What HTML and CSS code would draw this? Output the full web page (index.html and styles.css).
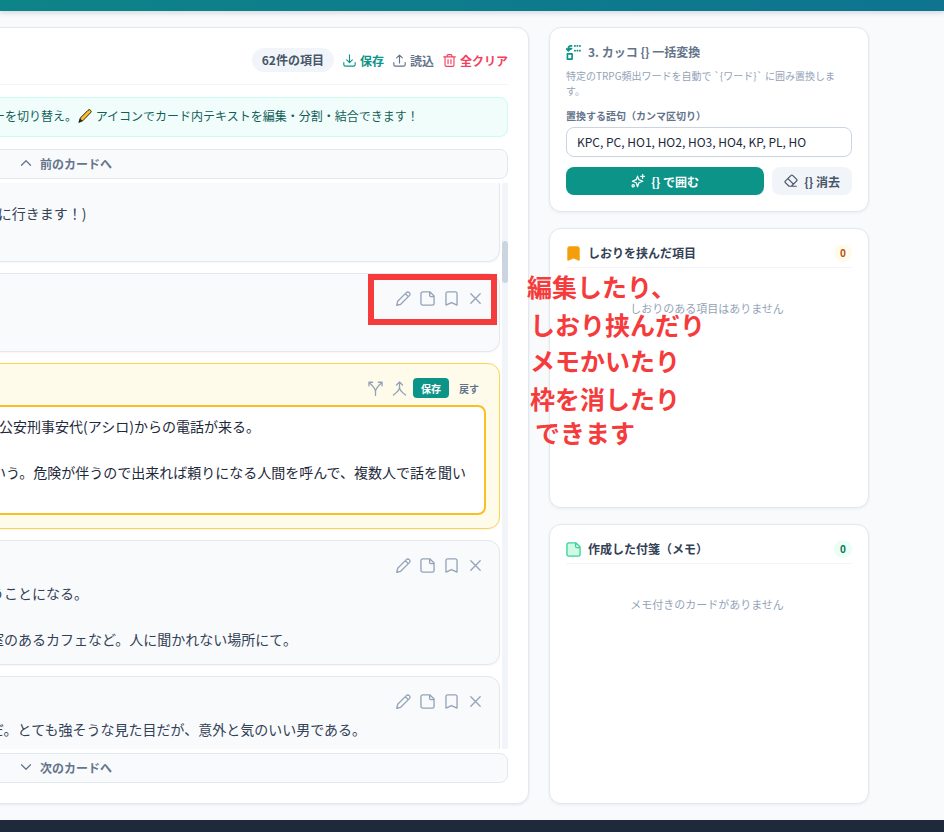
FILE: index.html
```html
<!DOCTYPE html>
<html lang="ja">
<head>
<meta charset="utf-8">
<title>カード編集</title>
<link rel="stylesheet" href="styles.css">
</head>
<body>
<svg class="sprite" aria-hidden="true">
  <symbol id="pencil" viewBox="0 0 16 16"><path d="M.8 15.200l1-4.200L11.300 1.500a2.300 2.300 0 0 1 3.200 3.200L5 14.200zM10 2.900l3.100 3.100"/></symbol>
  <symbol id="note" viewBox="0 0 16 16"><path d="M3 1h7.700L15 5.300V13a2 2 0 0 1-2 2H3a2 2 0 0 1-2-2V3a2 2 0 0 1 2-2zM10.300 1.200v3.500a1.200 1.200 0 0 0 1.200 1.200h3.300"/></symbol>
  <symbol id="bookmark" viewBox="0 0 16 16"><path d="M3.700 1h8.600A1.600 1.600 0 0 1 13.900 2.600v12.400L8 12.300 2.100 15V2.600A1.600 1.600 0 0 1 3.700 1z"/></symbol>
  <symbol id="close" viewBox="0 0 16 16"><path d="M3 3l10 10M13 3L3 13"/></symbol>
  <symbol id="split" viewBox="0 0 16 16"><path d="M8 15.500V11C8 8.500 6.500 6.500 1.500 1.800M8 11C8 8.500 9.500 6.500 14.500 1.800M1 5.200V1.300h4M11 1.300h4v3.900"/></symbol>
  <symbol id="merge" viewBox="0 0 16 16"><path d="M8 1.300v5.700c0 3-2.500 5-6.500 8M8 7c0 3 2.500 5 6.500 8M4.800 4.300L8 1.100l3.200 3.200"/></symbol>
  <symbol id="download" viewBox="0 0 16 16"><path d="M8 1v9.500M4.500 7.200L8 10.700l3.500-3.500M1 10.500V13a2 2 0 0 0 2 2h10a2 2 0 0 0 2-2v-2.500"/></symbol>
  <symbol id="upload" viewBox="0 0 16 16"><path d="M8 11V1.500M4.500 4.800L8 1.300l3.500 3.500M1 10.500V13a2 2 0 0 0 2 2h10a2 2 0 0 0 2-2v-2.500"/></symbol>
  <symbol id="trash" viewBox="0 0 16 16"><path d="M.8 3.500h14.400M5 3.300V2a1.200 1.200 0 0 1 1.200-1.200h3.600A1.200 1.200 0 0 1 11 2v1.300M2.500 3.800V13.500a1.700 1.700 0 0 0 1.700 1.700h7.600a1.700 1.700 0 0 0 1.700-1.700V3.800M6.200 7v5M9.800 7v5"/></symbol>
  <symbol id="up" viewBox="0 0 16 16"><path d="M2 11l6-6 6 6"/></symbol>
  <symbol id="down" viewBox="0 0 16 16"><path d="M2 5l6 6 6-6"/></symbol>
  <symbol id="replace" viewBox="0 0 16 16"><path d="M1.500 9.500h5v5.500h-5zM6 1H5a2.500 2.500 0 0 0-2.500 2.500V6M.6 4.200l1.900 2 2.300-2"/><path d="M6 3.800H3M9.300 1h.4M14.600 1h.4M9.300 6h.4M14.600 6h.4M12 1h.3M12 6h.3"/></symbol>
  <symbol id="sparkle" viewBox="0 0 16 16"><path d="M7.500 2.500l1.500 4 4.500 1.800L9 10l-1.500 4.500L6 10 1.500 8.300 6 6.500zM13.300.5v4.400M11.100 2.700h4.400"/><circle cx="2.500" cy="13.500" r="1.300"/></symbol>
  <symbol id="eraser" viewBox="0 0 16 16"><path d="M5.800 14L1.500 9.800a1.200 1.200 0 0 1 0-1.700l6.600-6.600a1.200 1.200 0 0 1 1.700 0l4.700 4.700a1.200 1.200 0 0 1 0 1.700L8.400 14zM4.500 5.300l6.300 6.300M5.800 14H14"/></symbol>
</svg>

<header class="topbar"></header>

<main class="workspace">
  <section class="panel">
    <div class="toolbar">
      <span class="count">62件の項目</span>
      <button class="tool tool-save" type="button"><svg><use href="#download"/></svg>保存</button>
      <button class="tool" type="button"><svg><use href="#upload"/></svg>読込</button>
      <button class="tool tool-clear" type="button"><svg><use href="#trash"/></svg>全クリア</button>
    </div>

    <p class="hint">ターを切り替え。<svg class="crayon" viewBox="0 0 14 14" aria-hidden="true"><path class="crayon-body" d="M1 13l1.300-4L10 1.300a1.600 1.600 0 0 1 2.500 0 1.600 1.600 0 0 1 0 2.500L5 11.500z"/><path class="crayon-tip" d="M.8 13.200l1.400-3.700 2.300 2.300z"/></svg> アイコンでカード内テキストを編集・分割・結合できます！</p>

    <button class="pager pager-prev" type="button"><svg><use href="#up"/></svg>前のカードへ</button>

    <div class="scroller">
      <div class="cards">
        <article class="card card-cut">
          <p class="text">2階に行きます！)<br>&nbsp;</p>
        </article>

        <article class="card">
          <div class="actions">
            <button type="button" aria-label="編集"><svg><use href="#pencil"/></svg></button>
            <button type="button" aria-label="メモ"><svg><use href="#note"/></svg></button>
            <button type="button" aria-label="しおり"><svg><use href="#bookmark"/></svg></button>
            <button type="button" aria-label="削除"><svg><use href="#close"/></svg></button>
          </div>
          <p class="text">&nbsp;</p>
        </article>

        <article class="card card-editing">
          <div class="actions">
            <button type="button" aria-label="分割"><svg><use href="#split"/></svg></button>
            <button type="button" aria-label="結合"><svg><use href="#merge"/></svg></button>
            <button type="button" class="commit">保存</button>
            <button type="button" class="revert">戻す</button>
          </div>
          <textarea class="editor" rows="4" aria-label="カード本文">: 公安刑事安代(アシロ)からの電話が来る。

いう。危険が伴うので出来れば頼りになる人間を呼んで、複数人で話を聞い</textarea>
        </article>

        <article class="card">
          <div class="actions">
            <button type="button" aria-label="編集"><svg><use href="#pencil"/></svg></button>
            <button type="button" aria-label="メモ"><svg><use href="#note"/></svg></button>
            <button type="button" aria-label="しおり"><svg><use href="#bookmark"/></svg></button>
            <button type="button" aria-label="削除"><svg><use href="#close"/></svg></button>
          </div>
          <p class="text">会うことになる。<br><br>個室のあるカフェなど。人に聞かれない場所にて。</p>
        </article>

        <article class="card">
          <div class="actions">
            <button type="button" aria-label="編集"><svg><use href="#pencil"/></svg></button>
            <button type="button" aria-label="メモ"><svg><use href="#note"/></svg></button>
            <button type="button" aria-label="しおり"><svg><use href="#bookmark"/></svg></button>
            <button type="button" aria-label="削除"><svg><use href="#close"/></svg></button>
          </div>
          <p class="text">男だ。とても強そうな見た目だが、意外と気のいい男である。<br>&nbsp;</p>
        </article>
      </div>
      <div class="track"><div class="thumb"></div></div>
    </div>

    <button class="pager pager-next" type="button"><svg><use href="#down"/></svg>次のカードへ</button>

    <div class="callout-box"></div>
  </section>

  <aside class="sidebar">
    <section class="box">
      <h2 class="box-title muted"><svg class="teal"><use href="#replace"/></svg>3. カッコ {} 一括変換</h2>
      <p class="desc">特定のTRPG頻出ワードを自動で `{ワード}` に囲み置換します。</p>
      <label class="label" for="words">置換する語句（カンマ区切り）</label>
      <input class="words" id="words" type="text" value="KPC, PC, HO1, HO2, HO3, HO4, KP, PL, HO">
      <div class="buttons">
        <button class="wrap" type="button"><svg><use href="#sparkle"/></svg>{} で囲む</button>
        <button class="unwrap" type="button"><svg><use href="#eraser"/></svg>{} 消去</button>
      </div>
    </section>

    <section class="box box-list">
      <div class="box-head">
        <h2 class="box-title"><svg class="amber"><use href="#bookmark"/></svg>しおりを挟んだ項目</h2>
        <span class="badge badge-amber">0</span>
      </div>
      <p class="empty">しおりのある項目はありません</p>
    </section>

    <section class="box box-list">
      <div class="box-head">
        <h2 class="box-title"><svg class="green"><use href="#note"/></svg>作成した付箋（メモ）</h2>
        <span class="badge badge-green">0</span>
      </div>
      <p class="empty">メモ付きのカードがありません</p>
    </section>

    <div class="callout-text">
      <p>編集したり、</p>
      <p class="second">しおり挟んだり</p>
      <p class="third">メモかいたり</p>
      <p class="fourth">枠を消したり</p>
      <p class="fifth">できます</p>
    </div>
  </aside>
</main>

<footer class="footer"></footer>
</body>
</html>
```

FILE: styles.css
```css
* {
  box-sizing: border-box;
}

body {
  margin: 0;
  min-height: 100vh;
  display: flex;
  flex-direction: column;
  overflow: hidden;
  background: #f8fafc;
  color: #334155;
  font-family: "Noto Sans CJK JP", "Noto Sans", sans-serif;
  font-size: 12px;
}

p,
h2 {
  margin: 0;
}

button,
input,
textarea {
  font: inherit;
  color: inherit;
}

button {
  display: flex;
  align-items: center;
  justify-content: center;
  padding: 0;
  border: 0;
  background: none;
}

svg {
  flex: none;
  width: 14px;
  height: 14px;
  fill: none;
  stroke: currentColor;
  stroke-width: 1.4;
  stroke-linecap: round;
  stroke-linejoin: round;
}

.sprite {
  position: absolute;
  width: 0;
  height: 0;
}

.topbar {
  height: 11px;
  background: linear-gradient(90deg, #0d8488, #0e7490);
  box-shadow: 0 2px 5px rgba(15, 23, 42, 0.15);
}

.workspace {
  flex: 1;
  display: flex;
  gap: 20px;
  padding: 16px 75px 16px 0;
}

/* The main panel runs past the left edge of the window. */
.panel {
  position: relative;
  flex: 1;
  min-width: 0;
  margin-left: -59px;
  display: flex;
  flex-direction: column;
  padding: 20px;
  border: 1px solid #e2e8f0;
  border-radius: 12px;
  background: #fff;
  box-shadow: 0 1px 3px rgba(15, 23, 42, 0.08);
}

.toolbar {
  display: flex;
  align-items: center;
  justify-content: flex-end;
  gap: 9px;
  padding-bottom: 12px;
  border-bottom: 1px solid #f1f5f9;
  font-weight: 700;
}

.count {
  padding: 0 10px;
  border-radius: 12px;
  background: #f1f5f9;
  color: #475569;
  line-height: 24px;
}

.tool {
  gap: 4px;
  color: #64748b;
}

.tool svg {
  width: 13px;
  height: 13px;
}

.tool-save {
  color: #0d9488;
}

.tool-clear {
  color: #f43f5e;
}

.hint {
  margin: 12px 0;
  padding: 9px 18px 11px;
  border: 1px solid #ccfbf1;
  border-radius: 8px;
  background: #f0fdfa;
  color: #115e59;
  line-height: 18px;
  white-space: nowrap;
}

.crayon {
  margin: 0 1px;
  vertical-align: -2px;
  stroke-width: 1;
}

.crayon-body {
  fill: #fbbf24;
  stroke: #292524;
}

.crayon-tip {
  fill: #292524;
  stroke: none;
}

.pager {
  justify-content: flex-start;
  gap: 8px;
  height: 30px;
  padding: 0 0 2px 57px;
  border: 1px solid #e2e8f0;
  border-radius: 8px;
  background: #f8fafc;
  color: #64748b;
  font-weight: 700;
}

.pager svg {
  width: 12px;
  height: 12px;
  stroke-width: 1.6;
}

.scroller {
  flex: 1 0 566px;
  height: 566px;
  display: flex;
  gap: 2px;
  margin: 4px 0;
  overflow: hidden;
}

.cards {
  flex: 1;
  min-width: 0;
  display: flex;
  flex-direction: column;
  gap: 11px;
}

.card {
  flex: none;
  padding: 13px;
  border: 1px solid #e2e8f0;
  border-radius: 12px;
  background: #f8fafc;
  box-shadow: 0 1px 2px rgba(15, 23, 42, 0.04);
}

.card-cut {
  padding-top: 19px;
  border-top: 0;
  border-top-right-radius: 0;
}

.card-editing {
  border-color: #fcd34d;
  background: #fffbeb;
}

.actions {
  display: flex;
  align-items: center;
  justify-content: flex-end;
  gap: 4px;
  height: 22px;
  margin-bottom: 6px;
  padding-right: 1px;
  color: #94a3b8;
}

.actions button {
  min-width: 20px;
  height: 20px;
}

.actions svg {
  width: 15px;
  height: 15px;
}

.actions .commit,
.actions .revert {
  font-size: 10px;
  font-weight: 700;
}

.actions .commit {
  padding: 0 8px;
  border-radius: 4px;
  background: #0d9488;
  color: #fff;
}

.actions .revert {
  padding: 0 6px;
  color: #64748b;
}

.text {
  font-size: 14px;
  line-height: 23px;
  white-space: nowrap;
}

.editor {
  display: block;
  width: 100%;
  padding: 8px 14px 6px;
  border: 2px solid #fbbf24;
  border-radius: 8px;
  outline: 0;
  background: #fff;
  color: #1e293b;
  font-size: 14px;
  line-height: 23px;
  resize: none;
  overflow: hidden;
}

.track {
  width: 6px;
  padding-top: 58px;
  background: #f1f5f9;
}

.thumb {
  height: 42px;
  border-radius: 3px;
  background: #cbd5e1;
}

.sidebar {
  position: relative;
  flex: 0 0 320px;
  display: flex;
  flex-direction: column;
  gap: 16px;
}

.box {
  padding: 16px;
  border: 1px solid #e2e8f0;
  border-radius: 12px;
  background: #fff;
  box-shadow: 0 1px 3px rgba(15, 23, 42, 0.06);
}

.box-list {
  flex: 1;
}

.box-title {
  display: flex;
  align-items: center;
  gap: 7px;
  color: #334155;
  font-size: 12px;
  font-weight: 700;
  line-height: 16px;
}

.box-title svg {
  width: 15px;
  height: 15px;
}

.muted {
  color: #64748b;
}

.teal {
  color: #0d9488;
  stroke-width: 1.8;
}

.amber {
  color: #f59e0b;
  fill: #f59e0b;
}

.green {
  color: #34d399;
  fill: #d1fae5;
}

.desc {
  margin: 8px 0 10px;
  color: #94a3b8;
  font-size: 10px;
  line-height: 15px;
}

.label {
  display: block;
  margin-bottom: 4px;
  color: #64748b;
  font-size: 10px;
  font-weight: 700;
  line-height: 15px;
}

.words {
  display: block;
  width: 100%;
  height: 30px;
  padding: 0 10px 2px;
  border: 1px solid #cbd5e1;
  border-radius: 8px;
  background: #fff;
  color: #1e293b;
}

.buttons {
  display: flex;
  gap: 8px;
  margin-top: 10px;
}

.buttons button {
  gap: 6px;
  height: 28px;
  border-radius: 8px;
  font-weight: 700;
}

.wrap {
  flex: 1;
  background: #0d9488;
  color: #fff;
}

.buttons .unwrap {
  padding: 0 12px;
  background: #f1f5f9;
  color: #475569;
}

.box-head {
  display: flex;
  align-items: center;
  justify-content: space-between;
  height: 23px;
  padding-bottom: 6px;
  border-bottom: 1px solid #f1f5f9;
}

.badge {
  width: 18px;
  border-radius: 9px;
  font-size: 10px;
  font-weight: 700;
  line-height: 18px;
  text-align: center;
}

.badge-amber {
  background: #fffbeb;
  color: #b45309;
}

.badge-green {
  background: #ecfdf5;
  color: #047857;
}

.empty {
  padding: 31px 4px 31px 0;
  color: #94a3b8;
  font-size: 11px;
  line-height: 18px;
  text-align: center;
}

/* Annotations laid over the interface */
.callout-box {
  position: absolute;
  top: 246px;
  right: 31px;
  width: 129px;
  height: 51px;
  border: 6px solid #f53b3b;
}

.callout-text {
  position: absolute;
  top: 241px;
  left: -22px;
  color: #f53b3b;
  font-size: 25px;
  font-weight: 700;
  line-height: 36px;
  white-space: nowrap;
}

.callout-text .second,
.callout-text .third,
.callout-text .fourth {
  padding-left: 3px;
}

.callout-text .second,
.callout-text .fourth {
  padding-top: 2px;
}

.callout-text .fifth {
  padding-left: 8px;
  line-height: 32px;
}

.footer {
  height: 12px;
  background: #1e293b;
}
```
